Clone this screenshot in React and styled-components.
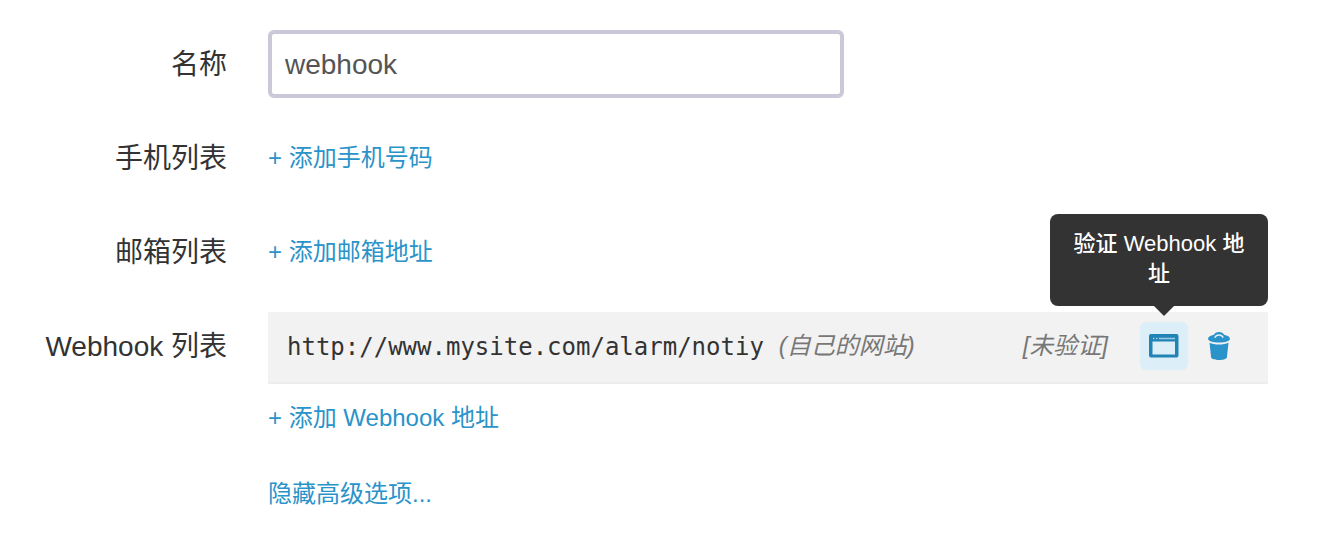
import React from "react";
import styled, { createGlobalStyle } from "styled-components";

const GlobalStyle = createGlobalStyle`
  * { box-sizing: border-box; }
  body {
    margin: 0;
    background: #fff;
    color: #333;
    font-family: "Liberation Sans", "Noto Sans CJK SC", sans-serif;
    font-size: 28px;
    line-height: 40px;
  }
`;

const Form = styled.form`
  display: flex;
  flex-direction: column;
  gap: 26px;
  padding: 30px 66px 20px 0;
`;

const Field = styled.div`
  display: grid;
  grid-template-columns: 227px minmax(0, 1fr);
  column-gap: 41px;
  align-items: start;
`;

const FieldLabel = styled.label`
  padding: 15px 0 13px;
  text-align: right;
`;

const FieldBody = styled.div`
  grid-column: 2;
  display: flex;
  flex-direction: column;
  align-items: flex-start;
  padding: ${(p) => (p.$link ? "14px 0" : "0")};
`;

const Footer = styled(Field)`
  padding-top: 10px;
`;

const TextInput = styled.input`
  width: 100%;
  max-width: 576px;
  height: 68px;
  padding: 2px 13px 0;
  border: 4px solid #cac8d9;
  border-radius: 6px;
  background: #fff;
  color: #555;
  font: inherit;
  outline: none;
`;

const LinkButton = styled.button`
  padding: 0;
  border: 0;
  background: none;
  color: #2a93c9;
  font: inherit;
  font-size: 24px;
  line-height: 40px;
  cursor: pointer;
`;

const HookList = styled.ul`
  width: 100%;
  margin: 0 0 14px;
  padding: 0;
  list-style: none;
`;

const HookRow = styled.li`
  position: relative;
  display: flex;
  align-items: center;
  height: 72px;
  padding: 0 25px 2px 19px;
  border-bottom: 2px solid #ededed;
  background: #f2f2f2;
`;

const HookUrl = styled.span`
  padding-top: 2px;
  font-family: "DejaVu Sans Mono", monospace;
  font-size: 24px;
`;

const Note = styled.em`
  margin-left: ${(p) => (p.$end ? "auto" : "15px")};
  margin-right: ${(p) => (p.$end ? "32px" : "0")};
  color: #777;
  font-size: 24px;
`;

const IconButton = styled.button`
  display: flex;
  align-items: center;
  justify-content: center;
  width: 48px;
  height: 48px;
  margin-right: ${(p) => (p.$active ? "7px" : "0")};
  padding: 0;
  border: 0;
  border-radius: 6px;
  background: ${(p) => (p.$active ? "#dceef7" : "transparent")};
  color: ${(p) => (p.$active ? "#2283b6" : "#2a93c9")};
  cursor: pointer;
`;

const Tooltip = styled.div`
  position: absolute;
  right: 0;
  bottom: calc(100% + 6px);
  width: 218px;
  padding: 15px 20px 17px;
  border-radius: 8px;
  background: #333;
  color: #fff;
  font-size: 22px;
  font-weight: 500;
  line-height: 30px;
  text-align: center;

  &::after {
    content: "";
    position: absolute;
    top: 100%;
    right: 94px;
    border: 10px solid transparent;
    border-top-color: #333;
    border-bottom: 0;
  }
`;

function WindowIcon() {
  return (
    <svg width="30" height="24" viewBox="0 0 30 24" fill="none" aria-hidden="true">
      <path
        fillRule="evenodd"
        d="M2 0h25.500a2 2 0 0 1 2 2v19.500a2 2 0 0 1-2 2H2a2 2 0 0 1-2-2V2a2 2 0 0 1 2-2ZM3.500 7.500v13h22.500v-13Z"
        fill="currentColor"
      />
      <path d="M4 4.500h1.500M7 4.500h1.500M10 4.500h16" stroke="#9ccce4" strokeWidth="1.300" />
    </svg>
  );
}

function TrashIcon() {
  return (
    <svg width="24" height="28" viewBox="0 0 24 28" aria-hidden="true">
      <path
        d="M1 6.800C1 5 3.500 3.500 7 2.800 7.800 1 9.500 0 12 0s4.200 1 5 2.800c3.500.7 6 2.200 6 4C23 9 18.200 10.600 12 10.600S1 9 1 6.800Z"
        fill="currentColor"
      />
      <path
        d="M7.800 5.600C8.800 3.600 10.200 3 12 3s3.200.6 4.200 2.600"
        fill="none"
        stroke="#e3eff5"
        strokeWidth="1.500"
      />
      <path
        d="M2.500 10.800C5 12 8.300 12.600 12 12.600s7-.6 9.500-1.800L19.900 25.200C19.500 27 16 28 12 28s-7.500-1-7.900-2.800Z"
        fill="currentColor"
      />
    </svg>
  );
}

export default function App() {
  return (
    <>
      <GlobalStyle />
      <Form onSubmit={(e) => e.preventDefault()}>
        <Field>
          <FieldLabel htmlFor="name">名称</FieldLabel>
          <FieldBody>
            <TextInput id="name" type="text" defaultValue="webhook" />
          </FieldBody>
        </Field>
        <Field>
          <FieldLabel htmlFor="add-phone">手机列表</FieldLabel>
          <FieldBody $link>
            <LinkButton id="add-phone" type="button">+ 添加手机号码</LinkButton>
          </FieldBody>
        </Field>
        <Field>
          <FieldLabel htmlFor="add-mail">邮箱列表</FieldLabel>
          <FieldBody $link>
            <LinkButton id="add-mail" type="button">+ 添加邮箱地址</LinkButton>
          </FieldBody>
        </Field>
        <Field>
          <FieldLabel htmlFor="add-webhook">Webhook 列表</FieldLabel>
          <FieldBody>
            <HookList>
              <HookRow>
                <HookUrl>http://www.mysite.com/alarm/notiy</HookUrl>
                <Note>(自己的网站)</Note>
                <Note $end>[未验证]</Note>
                <IconButton type="button" $active aria-labelledby="verify-tip">
                  <WindowIcon />
                </IconButton>
                <IconButton type="button" aria-label="删除">
                  <TrashIcon />
                </IconButton>
                <Tooltip id="verify-tip" role="tooltip">验证 Webhook 地址</Tooltip>
              </HookRow>
            </HookList>
            <LinkButton id="add-webhook" type="button">+ 添加 Webhook 地址</LinkButton>
          </FieldBody>
        </Field>
        <Footer>
          <FieldBody>
            <LinkButton type="button">隐藏高级选项...</LinkButton>
          </FieldBody>
        </Footer>
      </Form>
    </>
  );
}
